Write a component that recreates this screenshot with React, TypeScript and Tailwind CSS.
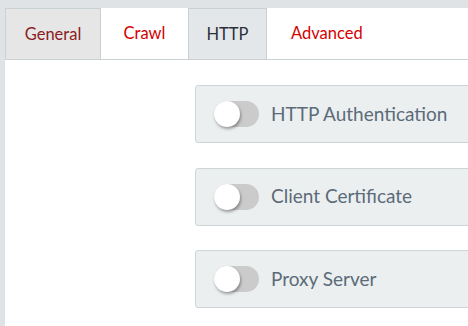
import React from "react";

const tabs = [
  { label: "General", w: "w-[96px]", cls: "bg-[#e6e6e6] border border-b-0 border-[#c9d1d4] text-[#8b1c1c]" },
  { label: "Crawl", w: "w-[87px]", cls: "bg-white text-[#d40000]" },
  { label: "HTTP", w: "w-[79px]", cls: "bg-[#e3e7ea] border border-b-0 border-[#c9d1d4] text-[#2b2f3a]" },
  { label: "Advanced", w: "px-6", cls: "bg-white text-[#d40000]" },
];

const options = ["HTTP Authentication", "Client Certificate", "Proxy Server"];

function Toggle() {
  return (
    <div className="relative h-[26px] w-[45px] rounded-full bg-[#cbcbcb]">
      <div className="absolute left-0 top-0 h-[26px] w-[26px] rounded-full bg-white shadow-[1px_2px_3px_rgba(0,0,0,0.35)]" />
    </div>
  );
}

export default function App() {
  return (
    <div
      className="h-[326px] w-[468px] overflow-hidden bg-[#dfe3e6] pl-[5px] pt-2"
      style={{ fontFamily: "Lato, 'Open Sans', sans-serif" }}
    >
      <div className="h-full bg-white">
        {/* Tabs */}
        <div className="flex h-[52px] border-b border-[#c9d1d4]">
          {tabs.map((t) => (
            <div
              key={t.label}
              className={`flex h-[51px] items-center justify-center text-[16.5px] ${t.w} ${t.cls}`}
            >
              {t.label}
            </div>
          ))}
        </div>

        {/* Options */}
        <div className="ml-[190px] mt-[25px] flex flex-col gap-[24.5px]">
          {options.map((o) => (
            <div
              key={o}
              className="flex h-[58px] w-[300px] items-center gap-3 rounded-[3px] border border-[#cdd5d8] bg-[#eceff0] pl-[18px]"
            >
              <Toggle />
              <span className="text-[19px] text-[#5b6b78]">{o}</span>
            </div>
          ))}
        </div>
      </div>
    </div>
  );
}
